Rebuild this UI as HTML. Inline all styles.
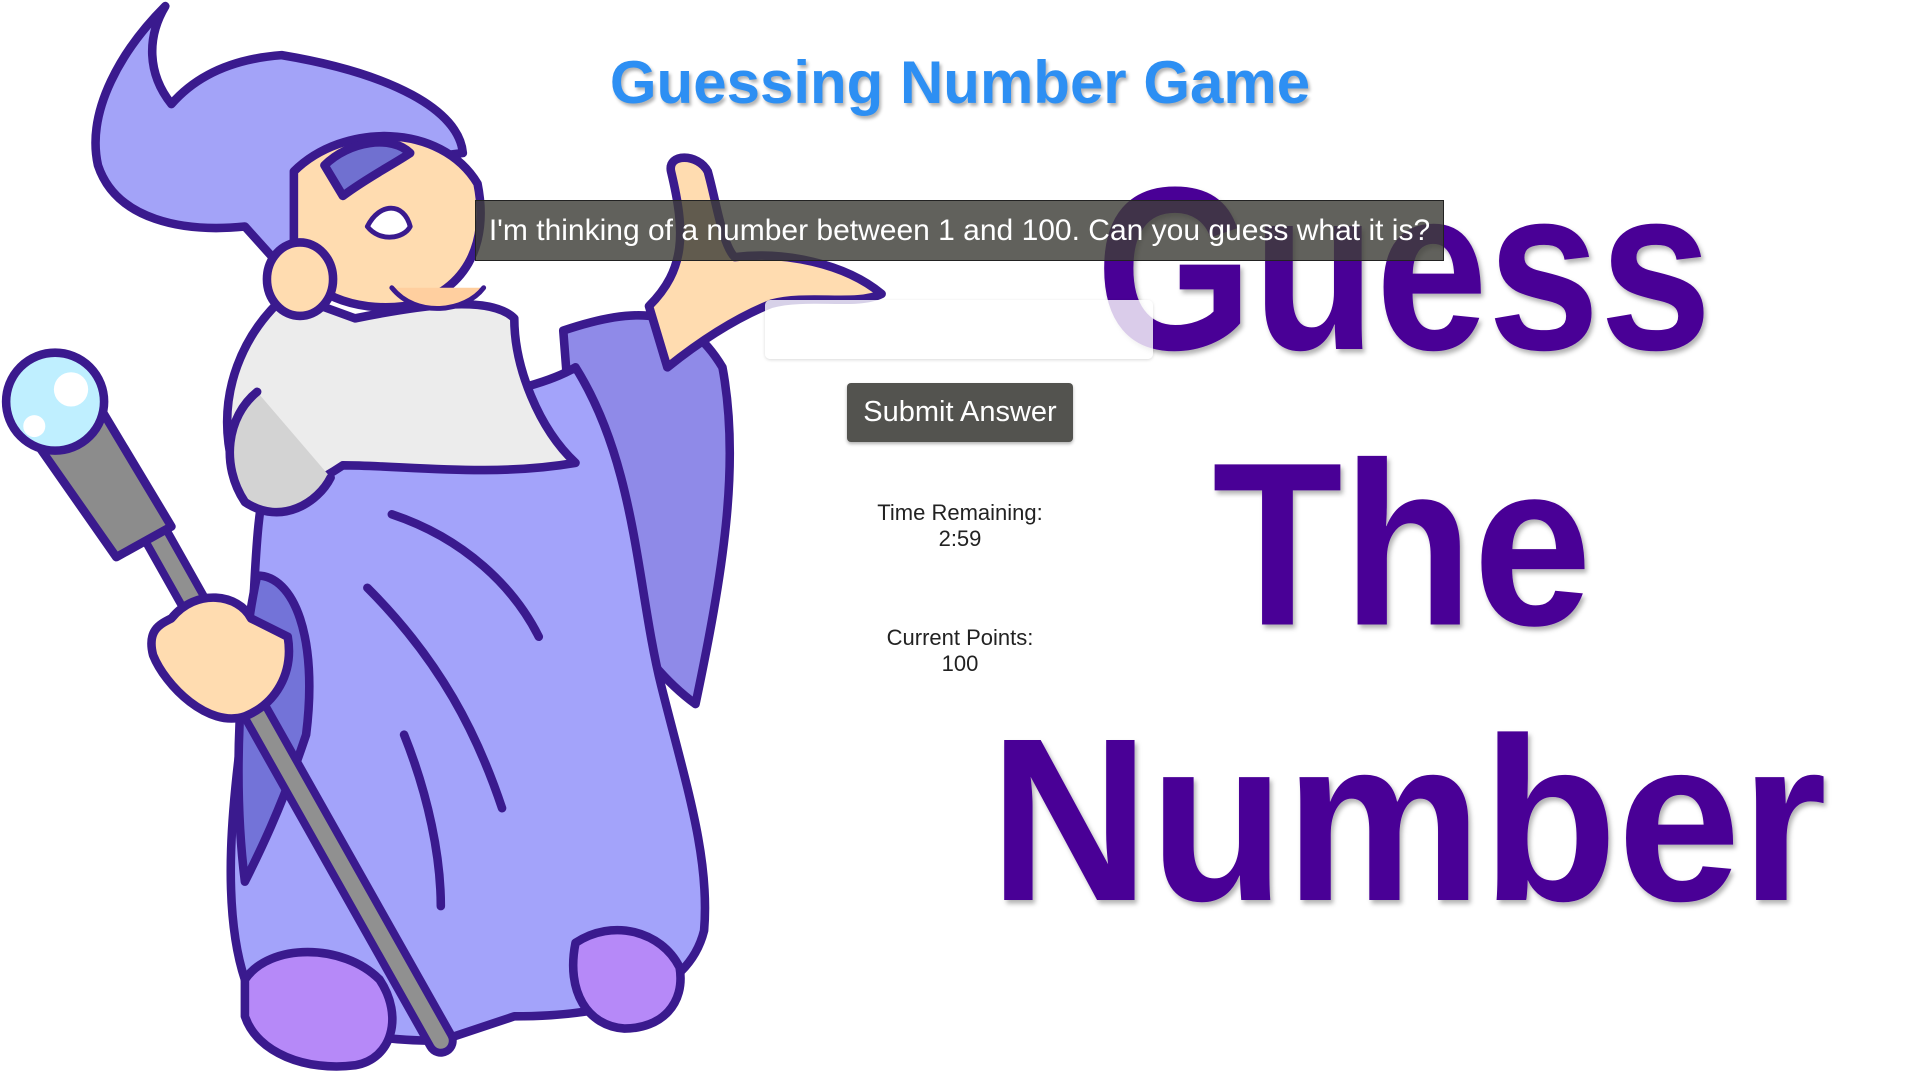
<!DOCTYPE html>
<html><head><meta charset="utf-8">
<style>
html,body{margin:0;padding:0;width:1920px;height:1080px;overflow:hidden;background:#fff;font-family:"Liberation Sans",Arial,sans-serif;}
svg.bg{position:absolute;left:0;top:0;width:1920px;height:1080px;}
h1{position:absolute;left:0;width:1920px;top:48px;margin:0;text-align:center;font-size:60px;font-weight:bold;color:#2d8ff3;text-shadow:2px 3px 3px rgba(0,0,0,.3);line-height:70px;}
.banner{position:absolute;left:475px;top:200px;width:967px;height:59px;background:rgba(62,62,56,.82);border:1px solid #222;color:#fff;font-size:30px;line-height:59px;text-align:center;white-space:nowrap;}
.inp{position:absolute;left:765px;top:300px;width:388px;height:59px;background:rgba(255,255,255,.8);border-radius:5px;box-shadow:0 1px 3px rgba(0,0,0,.15);}
.btn{position:absolute;left:847px;top:383px;width:226px;height:59px;background:#53534f;border-radius:4px;color:#fff;font-size:29px;line-height:59px;text-align:center;box-shadow:0 2px 3px rgba(0,0,0,.3);}
.stat{position:absolute;left:760px;width:400px;text-align:center;font-size:22px;line-height:26px;color:#222;}
</style></head><body>
<svg class="bg" viewBox="0 0 1568 882" xmlns="http://www.w3.org/2000/svg">
<defs><filter id="sh"><feDropShadow dx="2" dy="3" stdDeviation="2" flood-opacity=".3"/></filter></defs>
<g fill="#4a0096" font-family="Liberation Sans, Arial, sans-serif" font-weight="bold" font-size="190" filter="url(#sh)">
<text x="895" y="285" textLength="503" lengthAdjust="spacingAndGlyphs">Guess</text>
<text x="990" y="510" textLength="310" lengthAdjust="spacingAndGlyphs">The</text>
<text x="808" y="735" textLength="684" lengthAdjust="spacingAndGlyphs">Number</text>
</g>
<g stroke="#3a1a8e" stroke-width="7" stroke-linejoin="round" stroke-linecap="round">
<path d="M460 270 C520 250 560 250 590 300 C605 380 590 470 568 575 C520 540 480 470 470 400 Z" fill="#8f8ae8"/>
<path d="M530 250 C560 220 560 190 548 140 C545 125 570 125 578 140 C585 165 590 200 600 210 C640 205 690 215 720 240 C700 250 660 240 630 248 C600 260 570 280 545 300 Z" fill="#ffdcb0"/>
<path d="M135 5 C100 40 70 90 80 135 C95 180 150 190 200 185 L245 235 L300 135 L378 125 C375 90 320 60 230 45 C190 48 160 62 140 85 C120 60 120 30 135 5 Z" fill="#a3a3f8"/>
<path d="M220 380 C300 330 420 330 470 300 C520 380 520 480 540 560 C560 640 580 700 575 760 C560 820 480 830 420 830 L360 850 C300 850 240 840 200 800 C180 740 190 650 200 580 C210 500 205 430 220 380 Z" fill="#a3a3fa"/>
<path d="M210 470 C240 470 260 520 250 600 C230 660 210 700 200 720 C190 640 195 540 210 470 Z" fill="#7373d8"/>
<path d="M300 480 C360 540 390 600 410 660 M320 420 C380 440 420 480 440 520 M330 600 C350 650 360 700 360 740" fill="none"/>
<path d="M200 800 C220 770 280 770 310 800 C330 830 320 865 290 870 C250 875 210 860 200 830 Z" fill="#b689f8"/>
<path d="M470 770 C500 750 540 760 555 790 C560 820 540 840 510 840 C480 838 462 810 470 770 Z" fill="#b689f8"/>
<path d="M235 240 C200 270 175 320 190 380 C210 420 250 400 280 380 C330 380 400 390 470 378 C440 350 420 300 420 260 C400 240 340 250 290 260 Z" fill="#ececec"/>
<path d="M210 320 C185 340 180 380 200 410 C230 430 260 410 270 390" fill="#d3d3d3"/>
<path d="M240 140 C280 100 360 100 390 150 C400 200 380 240 330 250 C290 255 250 240 240 210 Z" fill="#ffdcb0"/>
<path d="M265 135 C285 115 320 110 335 125 C320 135 300 145 280 160 Z" fill="#7070d0"/>
<ellipse cx="245" cy="228" rx="27" ry="30" fill="#ffdcb0"/>
<path d="M300 185 C310 165 330 165 335 185 C330 195 310 198 300 185 Z" fill="#fff" stroke-width="4"/>
<path d="M320 235 C340 260 380 255 395 235" fill="#ffcf9f" stroke-width="4"/>
<line x1="95" y1="380" x2="360" y2="850" stroke="#3a1a8e" stroke-width="26"/>
<line x1="95" y1="380" x2="360" y2="850" stroke="#909090" stroke-width="13"/>
<path d="M25 355 L80 330 L140 430 L95 455 Z" fill="#8c8c8c"/>
<circle cx="45" cy="328" r="40" fill="#bfefff"/>
<circle cx="58" cy="318" r="14" fill="#fff" stroke="none"/>
<circle cx="28" cy="348" r="9" fill="#fff" stroke="none"/>
<path d="M140 505 C160 480 195 485 205 505 L235 520 C240 550 225 575 200 585 C170 595 135 560 125 535 C120 515 130 510 140 505 Z" fill="#ffdcb0"/>
</g>
</svg>
<h1>Guessing Number Game</h1>
<div class="banner">I'm thinking of a number between 1 and 100. Can you guess what it is?</div>
<div class="inp"></div>
<div class="btn">Submit Answer</div>
<div class="stat" style="top:500px">Time Remaining:<br>2:59</div>
<div class="stat" style="top:625px">Current Points:<br>100</div>
</body></html>
